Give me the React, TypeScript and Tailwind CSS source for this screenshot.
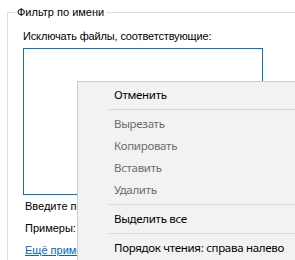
const dlg = { fontFamily: '"Liberation Sans", Arial, sans-serif' };
const ui = { fontFamily: '"Noto Sans", "Open Sans", sans-serif' };

function Item({ label, disabled }: { label: string; disabled?: boolean }) {
    return (
        <div
            className={`h-[22px] flex items-center pl-[36px] text-[11.5px] tracking-[-0.3px] whitespace-nowrap ${disabled ? "text-[#6d6d6d]" : "text-black"}`}
        >
            {label}
        </div>
    );
}

function Separator() {
    return (
        <div className="h-[7px] flex items-center pl-[31px]">
            <div className="h-px w-full bg-[#d7d7d7]" />
        </div>
    );
}

export default function App() {
    return (
        <div className="relative w-[295px] h-[260px] overflow-hidden bg-white text-black" style={dlg}>
            <fieldset className="ml-[7px] mt-[6px] border-l border-t border-[#dcdcdc] h-[300px] pt-[10px]">
                <legend className="ml-[7px] px-[2px] text-[11px] leading-[13px]">Фильтр по имени</legend>
                <div className="pl-[15px] text-[11px] leading-[13px]">
                    <div className="mt-[1px] tracking-[-0.15px]">Исключать файлы, соответствующие:</div>
                    <div className="mt-[5px] w-[240px] h-[147px] border border-[#0078d7]" />
                    <div className="mt-[5px] ml-[2px]">Введите по</div>
                    <div className="mt-[9px] ml-[2px]">Примеры:</div>
                    <div className="mt-[9px] ml-[2px] text-[#0066cc] underline">Ещё примеры</div>
                </div>
            </fieldset>

            <div
                className="absolute left-[77px] top-[81px] w-[240px] bg-[#f2f2f2] border border-[#cccccc] pt-[2px] pb-[4px]"
                style={ui}
            >
                <Item label="Отменить" />
                <Separator />
                <Item label="Вырезать" disabled />
                <Item label="Копировать" disabled />
                <Item label="Вставить" disabled />
                <Item label="Удалить" disabled />
                <Separator />
                <Item label="Выделить все" />
                <Separator />
                <Item label="Порядок чтения: справа налево" />
            </div>
        </div>
    );
}
